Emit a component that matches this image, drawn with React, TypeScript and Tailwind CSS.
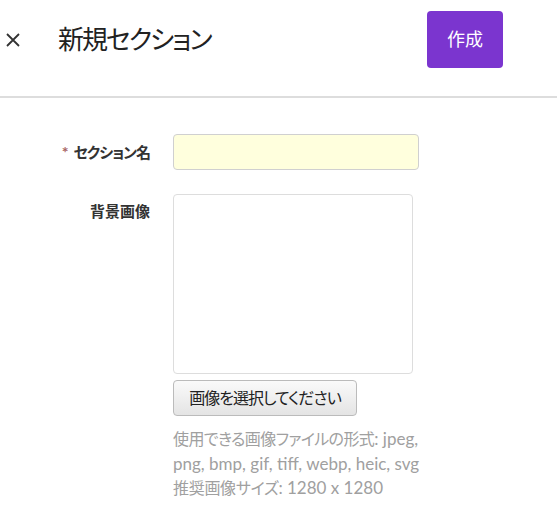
export default function App() {
  const font = { fontFamily: 'Lato, "Noto Sans CJK JP", sans-serif', fontFeatureSettings: '"palt"' };
  return (
    <div className="w-[557px] h-[514px] bg-white text-[#333] overflow-hidden" style={font}>
      <div className="h-[98px] border-b-2 border-[#dddddd]">
        <div className="flex items-center h-[79px]">
          <button className="w-[26px] flex items-center justify-center">
            <svg width="14" height="14" viewBox="0 0 14 14" stroke="#333" strokeWidth="1.8">
              <path d="M1 1 L13 13 M13 1 L1 13" />
            </svg>
          </button>
          <h1 className="ml-[32px] text-[26px] tracking-[-2px] text-[#222] font-normal">新規セクション</h1>
          <button className="ml-auto mr-[54px] w-[76px] h-[57px] rounded-[4px] bg-[#7b35cf] text-white text-[18px]">
            作成
          </button>
        </div>
      </div>

      <div className="pt-[36px]">
        <div className="flex items-center">
          <div className="w-[150px] text-right text-[15px] font-bold text-[#333]">
            <span className="text-[#a86464] mr-[5px] text-[16px]">*</span>
            <span className="tracking-[-1px]">セクション名</span>
          </div>
          <input className="ml-[23px] w-[246px] h-[36px] bg-[#ffffdd] border border-[#d0d0d0] rounded-[4px]" />
        </div>

        <div className="flex mt-[24px]">
          <div className="w-[150px] text-right text-[15px] font-bold text-[#333] pt-[6px]">背景画像</div>
          <div className="ml-[23px] flex flex-col">
            <div className="w-[240px] h-[180px] border border-[#dddddd] rounded-[4px]" />
            <button className="mt-[6px] w-[184px] h-[36px] border border-[#bbbbbb] rounded-[4px] bg-gradient-to-b from-[#fafafa] to-[#e4e4e4] text-[16px] tracking-[-1px] text-[#222]">
              画像を選択してください
            </button>
            <div className="mt-[11px] whitespace-nowrap text-[17px] leading-[24.5px] text-[#a0a0a0]">
              <div>
                <span className="text-[16px] tracking-[-0.6px]">使用できる画像ファイルの形式</span>: jpeg,
              </div>
              <div>png, bmp, gif, tiff, webp, heic, svg</div>
              <div>
                <span className="text-[16px] tracking-[-0.3px]">推奨画像サイズ</span>: 1280 x 1280
              </div>
            </div>
          </div>
        </div>
      </div>
    </div>
  );
}
